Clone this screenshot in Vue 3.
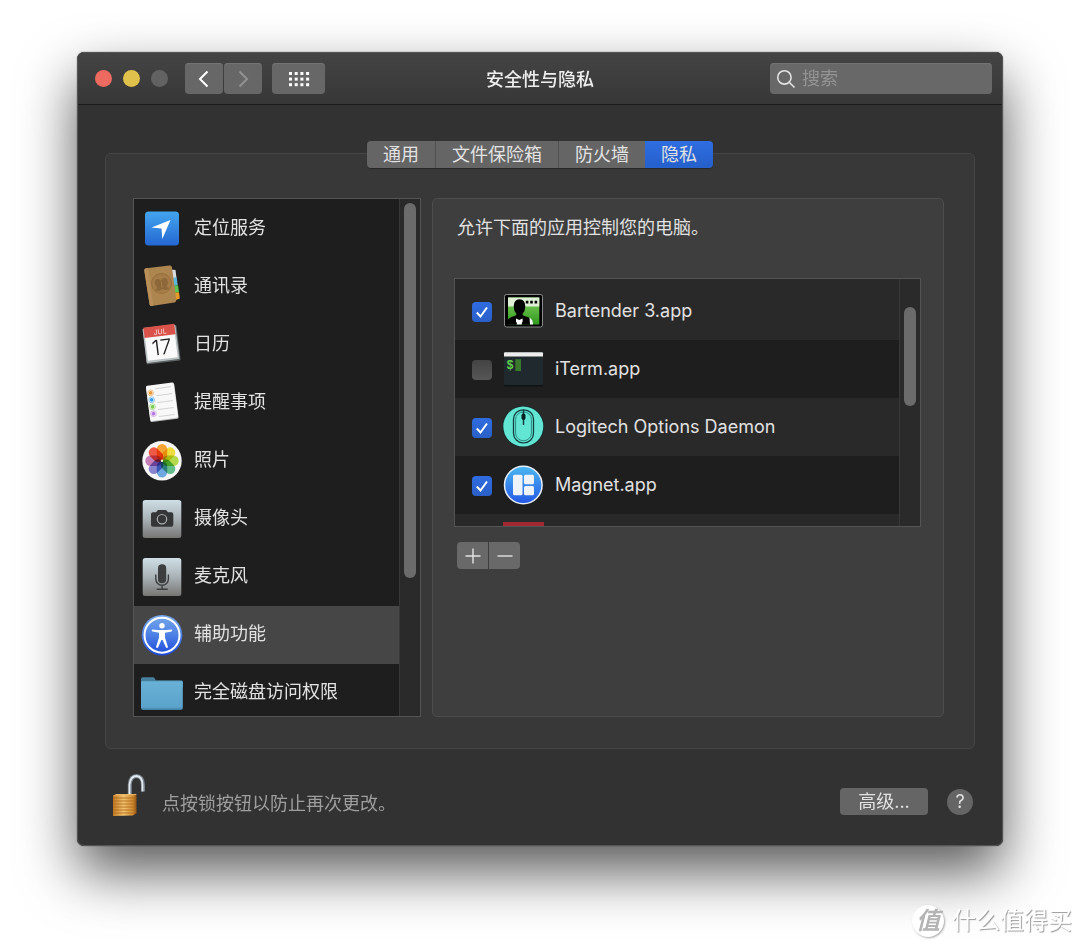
<script setup>
import { ref } from "vue"

const tabs = ["通用", "文件保险箱", "防火墙", "隐私"]
const activeTab = ref("隐私")

const categories = [
    { id: "location", label: "定位服务" },
    { id: "contacts", label: "通讯录" },
    { id: "calendar", label: "日历" },
    { id: "reminders", label: "提醒事项" },
    { id: "photos", label: "照片" },
    { id: "camera", label: "摄像头" },
    { id: "mic", label: "麦克风" },
    { id: "accessibility", label: "辅助功能" },
    { id: "disk", label: "完全磁盘访问权限" },
]
const activeCategory = ref("accessibility")

const apps = ref([
    { id: "bartender", name: "Bartender 3.app", allowed: true },
    { id: "iterm", name: "iTerm.app", allowed: false },
    { id: "logitech", name: "Logitech Options Daemon", allowed: true },
    { id: "magnet", name: "Magnet.app", allowed: true },
    { id: "more", name: "", allowed: false },
])

// 照片图标的花瓣颜色，从正上方开始顺时针
const petals = [
    "#f6a436",
    "#f0dc3c",
    "#b5d94c",
    "#62bd8a",
    "#6fa8e0",
    "#8a83cf",
    "#c77fb8",
    "#ee5a45",
]

const reminderDots = ["#f09a37", "#3a9fe8", "#7ed052", "#b77be0"]

const keyword = ref("")
</script>

<template>
    <div class="page">
        <main class="window">
            <header class="titlebar">
                <div class="tools">
                    <div class="lights">
                        <button class="light red" aria-label="关闭"></button>
                        <button class="light yellow" aria-label="最小化"></button>
                        <button class="light" aria-label="缩放" disabled></button>
                    </div>
                    <div class="nav">
                        <button class="tool" aria-label="后退">
                            <svg width="20" height="20" viewBox="0 0 20 20">
                                <path d="M13.5 2.5 6 10l7.5 7.5" class="arrow" />
                            </svg>
                        </button>
                        <button class="tool" aria-label="前进" disabled>
                            <svg width="20" height="20" viewBox="0 0 20 20">
                                <path d="M6.5 2.5 14 10l-7.5 7.5" class="arrow" />
                            </svg>
                        </button>
                    </div>
                    <button class="tool wide" aria-label="显示全部">
                        <svg width="22" height="16" viewBox="0 0 22 16">
                            <template v-for="row in 3" :key="row">
                                <rect
                                    v-for="col in 4"
                                    :key="col"
                                    :x="col * 5.7 - 4.7"
                                    :y="row * 5.6 - 4.6"
                                    width="3"
                                    height="3"
                                    fill="#fff"
                                />
                            </template>
                        </svg>
                    </button>
                </div>
                <h1>安全性与隐私</h1>
                <label class="search">
                    <svg width="20" height="20" viewBox="0 0 20 20">
                        <circle cx="8.4" cy="8.4" r="6.7" />
                        <path d="m13.2 13.2 5.3 5.3" />
                    </svg>
                    <input v-model="keyword" type="text" placeholder="搜索" aria-label="搜索" />
                </label>
            </header>

            <div class="content">
                <nav class="tabs">
                    <button
                        v-for="tab in tabs"
                        :key="tab"
                        :class="['tab', { active: activeTab === tab }]"
                        @click="activeTab = tab"
                    >
                        {{ tab }}
                    </button>
                </nav>

                <section class="panel">
                    <div class="list categories">
                        <div class="rows">
                            <button
                                v-for="item in categories"
                                :key="item.id"
                                :class="['category', { active: activeCategory === item.id }]"
                                @click="activeCategory = item.id"
                            >
                                <svg class="icon" width="42" height="42" viewBox="0 0 42 42">
                                    <g v-if="item.id === 'location'">
                                        <rect x="4" y="3.5" width="34" height="34" rx="3.5" fill="url(#blue)" />
                                        <path d="M29.5 12 21.3 31l-.8-10.5L10.5 19.500z" fill="#fff" />
                                    </g>
                                    <g v-else-if="item.id === 'contacts'">
                                        <path d="m29.5 3.5 5 .5 1 8-5 1z" fill="#d9dde0" />
                                        <path d="m31 12 4.7-.7 1 8-5 1z" fill="#5db6d8" />
                                        <path d="m32 20 5-.8 1 7-5 1z" fill="#5fc44f" />
                                        <path d="m33 27 5-.8.8 6.3-5 2z" fill="#e79a25" />
                                        <path d="M5 2.3 28.500-.6q2-.2 2.4 1.6L35.300 34q.2 2-1.8 2.4L10.500 40q-1.500.2-1.900-1.500L3.300 4.500q-.2-2 1.700-2.200z" fill="#ad854f" />
                                        <path d="M5 2.300 7 2l5.300 37.700-1.800.3q-1.500.2-1.900-1.500L3.300 4.500q-.2-2 1.700-2.200z" fill="#b88f58" />
                                        <g transform="rotate(-7 20.5 17.5)">
                                            <circle cx="20.500" cy="17.500" r="10" fill="#a57c47" stroke="#8f6b3c" stroke-width=".8" />
                                            <path d="M13.500 23.500q.5-1.500 2.500-2-2.500-2.500-2-6 .5-3 3.300-3 2.700 0 3.200 3 .5-3 3.200-3 2.800 0 3.300 3 .5 3.500-2 6 2 .5 2.500 2l-3.500 1-3.500-1.500-3.500 1.500z" fill="#8c6739" />
                                            <path d="M20.500 15.500v6.500M15 25.500q5.500 3 11 0" fill="none" stroke="#a57c47" />
                                        </g>
                                    </g>
                                    <g v-else-if="item.id === 'calendar'" transform="rotate(-7 21 20)">
                                        <rect x="3.500" y="3" width="34" height="35.500" rx="1" fill="#5e6567" />
                                        <rect x="3.500" y="2.500" width="33" height="34.500" rx="1" fill="#b9c0c2" />
                                        <rect x="5" y="2" width="30" height="33" fill="#fafafa" />
                                        <path d="M4.500 1.500h31V12h-31z" fill="#d9534b" />
                                        <text x="20.500" y="10" class="month">JUL</text>
                                        <text x="20.500" y="30.500" class="day">17</text>
                                    </g>
                                    <g v-else-if="item.id === 'reminders'" transform="rotate(-7.500 21 20)">
                                        <rect x="7" y="3" width="28.500" height="35.500" rx="1.500" fill="#bdbdbd" />
                                        <rect x="7" y="2" width="28" height="35.500" rx="1.500" fill="#f8f8f8" />
                                        <path d="M16 6h16M16 13h16M16 20h16M16 27h16M16 34h16" stroke="#ccc" stroke-width=".8" />
                                        <g v-for="(color, i) in reminderDots" :key="color">
                                            <circle cx="11" :cy="9.500 + i * 7" r="2.900" fill="none" :stroke="color" stroke-width=".5" />
                                            <circle cx="11" :cy="9.500 + i * 7" r="1.900" :fill="color" />
                                        </g>
                                    </g>
                                    <g v-else-if="item.id === 'photos'">
                                        <circle cx="21" cy="20.700" r="19.700" fill="#f6f6f6" />
                                        <g class="flower">
                                            <rect
                                                v-for="(color, i) in petals"
                                                :key="color"
                                                x="15.800"
                                                y="4"
                                                width="10.400"
                                                height="16.500"
                                                rx="5.200"
                                                :fill="color"
                                                :transform="`rotate(${i * 45} 21 20.7)`"
                                            />
                                        </g>
                                        <circle cx="21" cy="20.700" r="1.200" fill="#fff8cf" />
                                    </g>
                                    <g v-else-if="item.id === 'camera'">
                                        <rect x="1.700" y="2" width="38.600" height="38" rx="2.500" fill="url(#silver)" />
                                        <path d="M12 14.300h3l2-2.300h8l2 2.300h3.300q2 0 2 2v10.500q0 2-2 2H12q-2 0-2-2V16.300q0-2 2-2z" fill="#343637" />
                                        <circle cx="21" cy="21.200" r="4.700" fill="#343637" stroke="#a9afb1" stroke-width="1.200" />
                                    </g>
                                    <g v-else-if="item.id === 'mic'">
                                        <rect x="1.700" y="2" width="38.600" height="38" rx="2.500" fill="url(#silver)" />
                                        <rect x="17" y="8.300" width="8.200" height="19" rx="4.100" fill="#3c3e3f" />
                                        <path d="M14.800 18.500v4.500a6.300 6.300 0 0 0 12.600 0v-4.500M21.100 29.500v3.500M15.700 33.300h11" fill="none" stroke="#3c3e3f" stroke-width="1.400" />
                                    </g>
                                    <g v-else-if="item.id === 'accessibility'">
                                        <circle cx="21" cy="21.200" r="20.300" fill="url(#access)" />
                                        <circle cx="21" cy="21.200" r="17.500" fill="none" stroke="#fff" stroke-width="2" />
                                        <circle cx="21" cy="11.700" r="2.700" fill="#fff" />
                                        <path d="M11.500 15.400q9.500 1.200 19 0 1 .2.800 1.200-.1.700-.8.900l-6.500 1.200v4.800l2.900 9.200q.1 1-.8 1.200-.8.100-1.200-.6L21.600 26h-1.200l-3.300 7.300q-.4.700-1.200.6-.9-.2-.8-1.200l2.900-9.200v-4.800l-6.500-1.200q-.7-.2-.8-.9-.2-1 .8-1.200z" fill="#fff" />
                                    </g>
                                    <g v-else>
                                        <path d="M1.500 5.300h10.500q1.200 0 1.700 1l1 2h25.300q1.800 0 1.800 1.700v6H0V7q0-1.700 1.500-1.700z" fill="#47809c" />
                                        <path d="M0 10q0-.8.800-.8h40.200q.8 0 .8.800v26q0 2-2 2H2q-2 0-2-2z" fill="url(#folder)" />
                                    </g>
                                </svg>
                                <span>{{ item.label }}</span>
                            </button>
                        </div>
                        <div class="track">
                            <div class="thumb long"></div>
                        </div>
                    </div>

                    <div class="group">
                        <p>允许下面的应用控制您的电脑。</p>
                        <div class="list apps">
                            <div class="rows">
                                <label v-for="app in apps" :key="app.id" class="app">
                                    <span v-if="app.name" class="check">
                                        <input v-model="app.allowed" type="checkbox" />
                                        <svg v-if="app.allowed" width="20" height="20" viewBox="0 0 20 20">
                                            <path d="m4.800 10.500 3.700 4L15 5.500" />
                                        </svg>
                                    </span>
                                    <span v-else class="check"></span>
                                    <svg class="icon" width="42" height="42" viewBox="0 0 42 42">
                                        <g v-if="app.id === 'bartender'">
                                            <rect x="2.500" y="4.500" width="38" height="32.500" rx="2" fill="#000" stroke="#8b8b8b" />
                                            <rect x="6" y="7.500" width="31.300" height="27" fill="url(#green)" />
                                            <path d="M6 7.500h31.300v9H6z" fill="#dff0d6" />
                                            <path d="M6 34.500v-5q1.500-2 5-3 3.500-1 3.500-2.500-2.800-3-2.800-7.500 0-7 5.800-7.200 5.800.2 5.800 7.200 0 4.500-2.800 7.500 0 1.500 3.500 2.500 4 1 5.500 3l1.500 5z" fill="#000" />
                                            <path d="m14 28.500 3.300 1.500 3.300-1.500v3.500l-.8.500v2h-5v-2l-.8-.500zM27.500 27.500q3.500 2 3.500 7h-3z" fill="#fff" />
                                            <path d="M23.800 10.800h2.600v2.600h-2.600zM28.200 10.800h2.600v2.600h-2.600zM32.600 10.800h2.600v2.600h-2.600z" fill="#000" />
                                        </g>
                                        <g v-else-if="app.id === 'iterm'">
                                            <rect x="2" y="5" width="39" height="33.500" rx="1.500" fill="#0e1315" />
                                            <rect x="2" y="4.500" width="39" height="32.500" rx="1" fill="#20292e" />
                                            <path d="M3 4.200h37q1 0 1 1v3.300H2V5.200q0-1 1-1z" fill="#ededed" />
                                            <text x="4.500" y="21" class="prompt">$</text>
                                            <path d="M13.300 11.300h5.700V23h-5.700z" fill="#3a7a2c" />
                                        </g>
                                        <g v-else-if="app.id === 'logitech'">
                                            <circle cx="21.300" cy="20.500" r="20.800" fill="#14282a" />
                                            <circle cx="21.300" cy="20.500" r="20" fill="#62e6d3" />
                                            <rect x="11.500" y="3.800" width="20" height="33" rx="9.500" fill="none" stroke="#123e40" stroke-width="1.300" />
                                            <rect x="13.600" y="6" width="15.800" height="28.600" rx="7.500" fill="none" stroke="#2c8a83" />
                                            <path d="M21.500 4v15" stroke="#123e40" stroke-width="1.500" />
                                            <rect x="19.500" y="7.500" width="4" height="6.500" rx="2" fill="#071f20" />
                                        </g>
                                        <g v-else-if="app.id === 'magnet'">
                                            <circle cx="21.300" cy="21" r="18.800" fill="url(#magnet)" stroke="#e9eff6" stroke-width="1.500" />
                                            <rect x="11" y="10.700" width="9.500" height="20.600" rx="1.500" fill="#eef3fa" />
                                            <rect x="22" y="10.700" width="10" height="9.500" rx="1.500" fill="#eef3fa" />
                                            <rect x="22" y="22" width="10" height="9.300" rx="1.500" fill="#eef3fa" />
                                        </g>
                                        <rect v-else x="1" y="0" width="41" height="40" fill="#a12932" />
                                    </svg>
                                    <span class="name">{{ app.name }}</span>
                                </label>
                            </div>
                            <div class="track">
                                <div class="thumb short"></div>
                            </div>
                        </div>
                        <div class="edit">
                            <button aria-label="添加">
                                <svg width="16" height="16" viewBox="0 0 16 16">
                                    <path d="M8 .5v15M.5 8h15" />
                                </svg>
                            </button>
                            <button aria-label="移除">
                                <svg width="16" height="16" viewBox="0 0 16 16">
                                    <path d="M.5 8h15" />
                                </svg>
                            </button>
                        </div>
                    </div>
                </section>

                <footer class="footer">
                    <button class="lock" aria-label="锁定">
                        <svg width="46" height="44" viewBox="0 0 46 44">
                            <path d="M24.800 22V11.500Q25.500 3 31.500 3q6.500.5 6.500 9v6.500" fill="none" stroke="#77828c" stroke-width="4" />
                            <path d="M24.500 22V11.500Q25.500 3 31.500 3q6 .5 6 9v6.500" fill="none" stroke="#e4e9ed" stroke-width="1.800" />
                            <path d="M8 22.500 12 21h19l.5 1v18L28 42.500 8 43z" fill="url(#brass)" />
                            <path d="M8 25h23.500M8 28h23.500M8 31h23.500M8 34h23.500M8 37h23.500M8 40h23.500" stroke="#a8651c" stroke-width=".8" />
                            <path d="M8 22.500 12 21h19l.5 1z" fill="#e9b868" />
                        </svg>
                    </button>
                    <p>点按锁按钮以防止再次更改。</p>
                    <div class="actions">
                        <button class="advanced">高级...</button>
                        <button class="help" aria-label="帮助">?</button>
                    </div>
                </footer>
            </div>
        </main>

        <div class="watermark">
            <span class="badge">值</span>
            <span>什么值得买</span>
        </div>

        <svg class="defs" width="0" height="0">
            <defs>
                <linearGradient id="blue" x2="0" y2="1">
                    <stop stop-color="#43a5ee" />
                    <stop offset="1" stop-color="#2567d2" />
                </linearGradient>
                <linearGradient id="silver" x2="0" y2="1">
                    <stop stop-color="#cfdfe6" />
                    <stop offset=".5" stop-color="#a9b2b6" />
                    <stop offset="1" stop-color="#777674" />
                </linearGradient>
                <linearGradient id="access" x2="0" y2="1">
                    <stop stop-color="#79a9ec" />
                    <stop offset=".5" stop-color="#4c80e6" />
                    <stop offset="1" stop-color="#1c48d8" />
                </linearGradient>
                <linearGradient id="folder" x2="0" y2="1">
                    <stop stop-color="#69b0d6" />
                    <stop offset=".9" stop-color="#5ba3ca" />
                    <stop offset="1" stop-color="#3f7d9f" />
                </linearGradient>
                <linearGradient id="green" x2="0" y2="1">
                    <stop offset=".3" stop-color="#6abf4b" />
                    <stop offset="1" stop-color="#2f9a1e" />
                </linearGradient>
                <linearGradient id="magnet" x2="0" y2="1">
                    <stop stop-color="#4ab8f2" />
                    <stop offset="1" stop-color="#2457e6" />
                </linearGradient>
                <linearGradient id="brass">
                    <stop stop-color="#c27a22" />
                    <stop offset=".45" stop-color="#f3c36e" />
                    <stop offset=".85" stop-color="#d08a30" />
                    <stop offset="1" stop-color="#8a5013" />
                </linearGradient>
            </defs>
        </svg>
    </div>
</template>

<style>
body {
    margin: 0;
    background: #fff;
}
</style>

<style scoped>
.page {
    box-sizing: border-box;
    min-height: 100vh;
    padding: 52px 0 9px;
    overflow: hidden;
    font-family: Inter, "Noto Sans CJK SC", sans-serif;
    font-size: 18px;
    line-height: 26px;
    color: #e2e2e2;
}

button,
input {
    font: inherit;
    color: inherit;
    border: none;
    padding: 0;
    margin: 0;
}

h1,
p {
    margin: 0;
    font-size: 18px;
    font-weight: 400;
}

.defs {
    position: absolute;
}

.window {
    margin: 0 77px;
    border: 1px solid #555;
    border-radius: 7px;
    background: #323232;
    box-shadow:
        0 0 1px #000,
        0 26px 56px rgba(0, 0, 0, 0.65);
}

.titlebar {
    display: grid;
    grid-template-columns: 1fr auto 1fr;
    align-items: center;
    height: 51px;
    padding: 0 10px;
    border-bottom: 1px solid #1a1a1a;
    border-radius: 6px 6px 0 0;
    background: linear-gradient(#444, #373737);
}

.titlebar h1 {
    padding-top: 2px;
    font-weight: 500;
    color: #eee;
}

.tools,
.lights,
.nav {
    display: flex;
    align-items: center;
}

.tools {
    gap: 10px;
}

.lights {
    gap: 11px;
    margin: 0 7px;
}

.light {
    width: 17px;
    height: 17px;
    border-radius: 50%;
    background: #626262;
}

.light.red {
    background: #ec6a5f;
}

.light.yellow {
    background: #e0c14c;
}

.nav {
    gap: 1px;
}

.tool {
    display: grid;
    place-items: center;
    width: 38px;
    height: 31px;
    border-radius: 4px;
    background: #676767;
    box-shadow: inset 0 1px #747474;
}

.tool.wide {
    width: 53px;
}

.arrow {
    fill: none;
    stroke: #fff;
    stroke-width: 2;
}

.tool:disabled .arrow {
    stroke: #929292;
}

.search {
    display: flex;
    align-items: center;
    gap: 6px;
    justify-self: end;
    box-sizing: border-box;
    width: 222px;
    height: 31px;
    padding: 0 6px;
    border-radius: 4px;
    background: #686868;
    box-shadow: inset 0 1px #747474;
}

.search svg {
    flex: none;
    fill: none;
    stroke: #e2e2e2;
    stroke-width: 1.6;
}

.search input {
    flex: 1;
    min-width: 0;
    background: none;
    outline: none;
}

.search input::placeholder {
    color: #949494;
    opacity: 1;
}

.content {
    padding: 36px 27px 28px;
}

.tabs {
    position: relative;
    display: flex;
    width: max-content;
    margin: 0 auto -15px;
    border-radius: 4px;
    overflow: hidden;
    box-shadow: 0 1px 1px rgba(0, 0, 0, 0.3);
}

.tab {
    height: 27px;
    padding: 0 16px;
    border-right: 1px solid #505050;
    background: #656565;
}

.tab:nth-last-child(-n + 2) {
    border-right: none;
}

.tab.active {
    background: linear-gradient(#2f6de0, #2560cb);
}

.panel {
    display: grid;
    grid-template-columns: 288px 1fr;
    gap: 11px;
    padding: 44px 30px 31px 27px;
    border: 1px solid #464646;
    border-radius: 6px;
    background: #383838;
}

.list {
    display: flex;
    box-sizing: border-box;
    border: 1px solid #545454;
    background: #1e1e1e;
    overflow: hidden;
}

.rows {
    flex: 1;
    min-width: 0;
}

.categories {
    height: 519px;
}

.categories .rows {
    padding-top: 1px;
}

.category {
    display: flex;
    align-items: center;
    gap: 11px;
    width: 100%;
    height: 58px;
    padding: 0 7px;
    background: none;
    text-align: left;
}

.category.active {
    background: #464646;
}

.category span {
    padding-bottom: 2px;
}

.icon {
    flex: none;
    overflow: visible;
}

.flower {
    isolation: isolate;
}

.flower rect {
    mix-blend-mode: multiply;
}

.month {
    fill: #fbe3e0;
    font-size: 7px;
    text-anchor: middle;
}

.day {
    fill: #222;
    font-size: 21px;
    font-weight: 300;
    text-anchor: middle;
}

.prompt {
    fill: #62d24c;
    font-family: "Liberation Mono", monospace;
    font-size: 12px;
    font-weight: 700;
}

.track {
    flex: none;
    box-sizing: border-box;
    width: 21px;
    padding: 4px;
    border-left: 1px solid #383838;
    background: #2a2a2a;
}

.thumb {
    width: 12px;
    border-radius: 6px;
    background: #6b6b6b;
}

.thumb.long {
    height: 375px;
}

.thumb.short {
    height: 99px;
    margin-top: 24px;
}

.group {
    padding: 16px 22px;
    border: 1px solid #4d4d4d;
    border-radius: 5px;
    background: #3e3e3e;
}

.group p {
    padding-left: 2px;
}

.apps {
    height: 249px;
    margin: 37px 0 15px -1px;
    background: #292929;
}

.apps .rows {
    padding-top: 3px;
}

.app {
    display: flex;
    align-items: center;
    height: 58px;
    padding-left: 17px;
}

.app:nth-child(even) {
    background: #1e1e1e;
}

.check {
    display: grid;
    width: 20px;
    height: 20px;
    margin: 2px 10px 0 0;
}

.check input,
.check svg {
    grid-area: 1 / 1;
}

.check input {
    appearance: none;
    width: 20px;
    height: 20px;
    border-radius: 4px;
    background: linear-gradient(#434343, #575757);
}

.check input:checked {
    background: linear-gradient(#2f6ce0, #2a60c8);
}

.check svg {
    fill: none;
    stroke: #fff;
    stroke-width: 2;
    pointer-events: none;
}

.name {
    margin-left: 11px;
}

.edit {
    display: flex;
    gap: 1px;
    margin-left: 2px;
}

.edit button {
    display: grid;
    place-items: center;
    width: 31px;
    height: 27px;
    border-radius: 4px 0 0 4px;
    background: #696969;
}

.edit button:last-child {
    border-radius: 0 4px 4px 0;
}

.edit svg {
    fill: none;
    stroke: #e4e4e4;
    stroke-width: 1.4;
}

.footer {
    display: flex;
    align-items: flex-end;
    margin-top: 24px;
}

.footer p {
    margin-left: 11px;
    color: #9e9e9e;
}

.lock {
    display: grid;
    background: none;
}

.actions {
    display: flex;
    align-items: center;
    gap: 19px;
    margin: 0 2px 2px auto;
}

.advanced {
    width: 88px;
    height: 27px;
    border-radius: 4px;
    background: #656565;
}

.help {
    width: 26px;
    height: 26px;
    border-radius: 50%;
    background: #656565;
}

.watermark {
    position: relative;
    display: flex;
    align-items: center;
    justify-content: flex-end;
    gap: 8px;
    margin: 58px 8px 0;
    font-size: 24px;
    line-height: 34px;
    color: #fff;
    text-shadow: 1px 1px 1px #999;
}

.badge {
    width: 32px;
    height: 32px;
    border-radius: 50%;
    background: #fff;
    box-shadow: 1px 1px 2px #aaa;
    color: #b4b4b4;
    font-style: italic;
    font-weight: 700;
    line-height: 32px;
    text-align: center;
    text-shadow: none;
}
</style>
